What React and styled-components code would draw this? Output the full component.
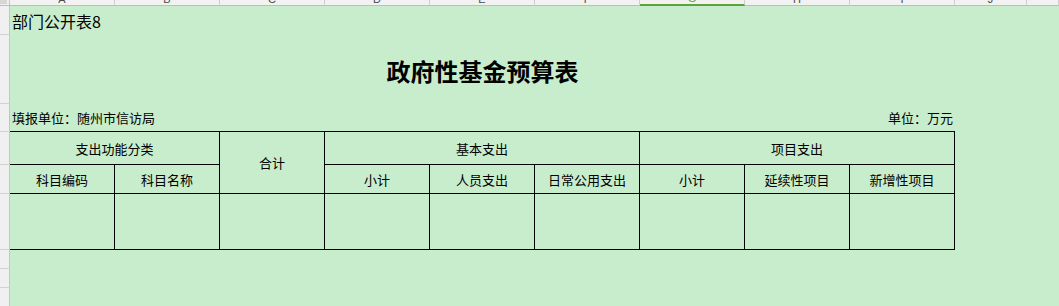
import React from 'react'
import styled, { createGlobalStyle } from 'styled-components'

const GlobalStyle = createGlobalStyle`
    html, body {
        margin: 0;
        padding: 0;
        background: #c7edcc;
    }
    body {
        font-family: "Noto Sans CJK SC", "Noto Sans", sans-serif;
        color: #000;
    }
`

const Window = styled.div`
    width: 100vw;
    height: 100vh;
    overflow: hidden;
    display: flex;
    flex-direction: column;
    background: #c7edcc;
`

const Ruler = styled.div`
    display: flex;
    height: 6px;
    flex-shrink: 0;
`

const Corner = styled.div`
    box-sizing: border-box;
    width: 10px;
    height: 6px;
    background: #f0f0f0;
    border-right: 1px solid #c4c4c4;
    border-bottom: 1px solid #bdbdbd;
    display: flex;
    align-items: flex-start;

    &::before {
        content: '';
        width: 7px;
        height: 4px;
        background: #d6d6d6;
    }
`

const ColHead = styled.div`
    box-sizing: border-box;
    width: ${p => p.$w ? `${p.$w}px` : 'auto'};
    flex: ${p => p.$w ? '0 0 auto' : '1'};
    height: 6px;
    overflow: hidden;
    background: #f2f2f2;
    border-right: 1px solid #cfcfcf;
    border-bottom: ${p => p.$active ? '2px solid #5ba33a' : '1px solid #bdbdbd'};
    display: flex;
    justify-content: center;
    align-items: flex-end;
    font-family: "Liberation Sans", Arial, sans-serif;
    font-size: 11px;
    line-height: 11px;
    color: ${p => p.$active ? '#5ba33a' : '#4a4a4a'};
`

const Body = styled.div`
    display: flex;
    flex: 1;
    min-height: 0;
`

const RowRuler = styled.div`
    display: flex;
    flex-direction: column;
    width: 10px;
    flex-shrink: 0;
`

const RowHead = styled.div`
    box-sizing: border-box;
    height: ${p => p.$h}px;
    flex-shrink: 0;
    background: #f0f0f0;
    border-right: 1px solid #c4c4c4;
    border-bottom: 1px solid #d2d2d2;
`

const RowFill = styled.div`
    flex: 1;
    background: #f0f0f0;
    border-right: 1px solid #c4c4c4;
`

const Canvas = styled.div`
    display: flex;
    flex-direction: column;
    width: 945px;
`

const NoteRow = styled.div`
    height: 29px;
    display: flex;
    align-items: center;
    padding-left: 2px;
    font-size: 16px;
    line-height: 16px;
`

const TitleRow = styled.div`
    height: 69px;
    display: flex;
    align-items: center;
    justify-content: center;
    padding-top: 2px;
    box-sizing: border-box;
`

const Title = styled.h1`
    margin: 0;
    font-size: 24px;
    font-weight: 700;
    line-height: 24px;
`

const MetaRow = styled.div`
    height: 27px;
    display: flex;
    align-items: center;
    justify-content: space-between;
    padding: 0 2px 0 2px;
    font-size: 13px;
    line-height: 13px;
`

const Table = styled.div`
    display: grid;
    grid-template-columns: repeat(9, 105px);
    grid-template-rows: 33px 29px 56px;
    border-top: 1px solid #000;
`

const Cell = styled.div`
    box-sizing: border-box;
    grid-column: ${p => p.$col || 'auto'};
    grid-row: ${p => p.$row || 'auto'};
    border-right: 1px solid #000;
    border-bottom: 1px solid #000;
    display: flex;
    align-items: center;
    justify-content: center;
    font-size: 13px;
    line-height: 13px;
`

const columns = [
    { key: 'A', w: 105 }, { key: 'B', w: 105 }, { key: 'C', w: 105 },
    { key: 'D', w: 105 }, { key: 'E', w: 105 }, { key: 'F', w: 105 },
    { key: 'G', w: 105 }, { key: 'H', w: 105 }, { key: 'I', w: 105 },
    { key: 'J', w: 72 }, { key: 'K', label: '' },
]

const rowHeights = [29, 69, 28, 33, 29, 56, 19, 19, 19]

const subHeads = ['科目编码', '科目名称', '小计', '人员支出', '日常公用支出', '小计', '延续性项目', '新增性项目']

export default function App() {
    return (
        <Window>
            <GlobalStyle />
            <Ruler>
                <Corner />
                {columns.map(c => (
                    <ColHead key={c.key} $w={c.w} $active={c.key === 'G'}>
                        {c.label !== undefined ? c.label : c.key}
                    </ColHead>
                ))}
            </Ruler>
            <Body>
                <RowRuler>
                    {rowHeights.map((h, i) => <RowHead key={i} $h={h} />)}
                    <RowFill />
                </RowRuler>
                <Canvas>
                    <NoteRow>部门公开表8</NoteRow>
                    <TitleRow><Title>政府性基金预算表</Title></TitleRow>
                    <MetaRow>
                        <span>填报单位：随州市信访局</span>
                        <span>单位：万元</span>
                    </MetaRow>
                    <Table>
                        <Cell $col="1 / span 2">支出功能分类</Cell>
                        <Cell $col="3" $row="1 / span 2">合计</Cell>
                        <Cell $col="4 / span 3">基本支出</Cell>
                        <Cell $col="7 / span 3">项目支出</Cell>
                        {subHeads.map((t, i) => <Cell key={i}>{t}</Cell>)}
                        {Array.from({ length: 9 }).map((_, i) => <Cell key={'e' + i} />)}
                    </Table>
                </Canvas>
            </Body>
        </Window>
    )
}
